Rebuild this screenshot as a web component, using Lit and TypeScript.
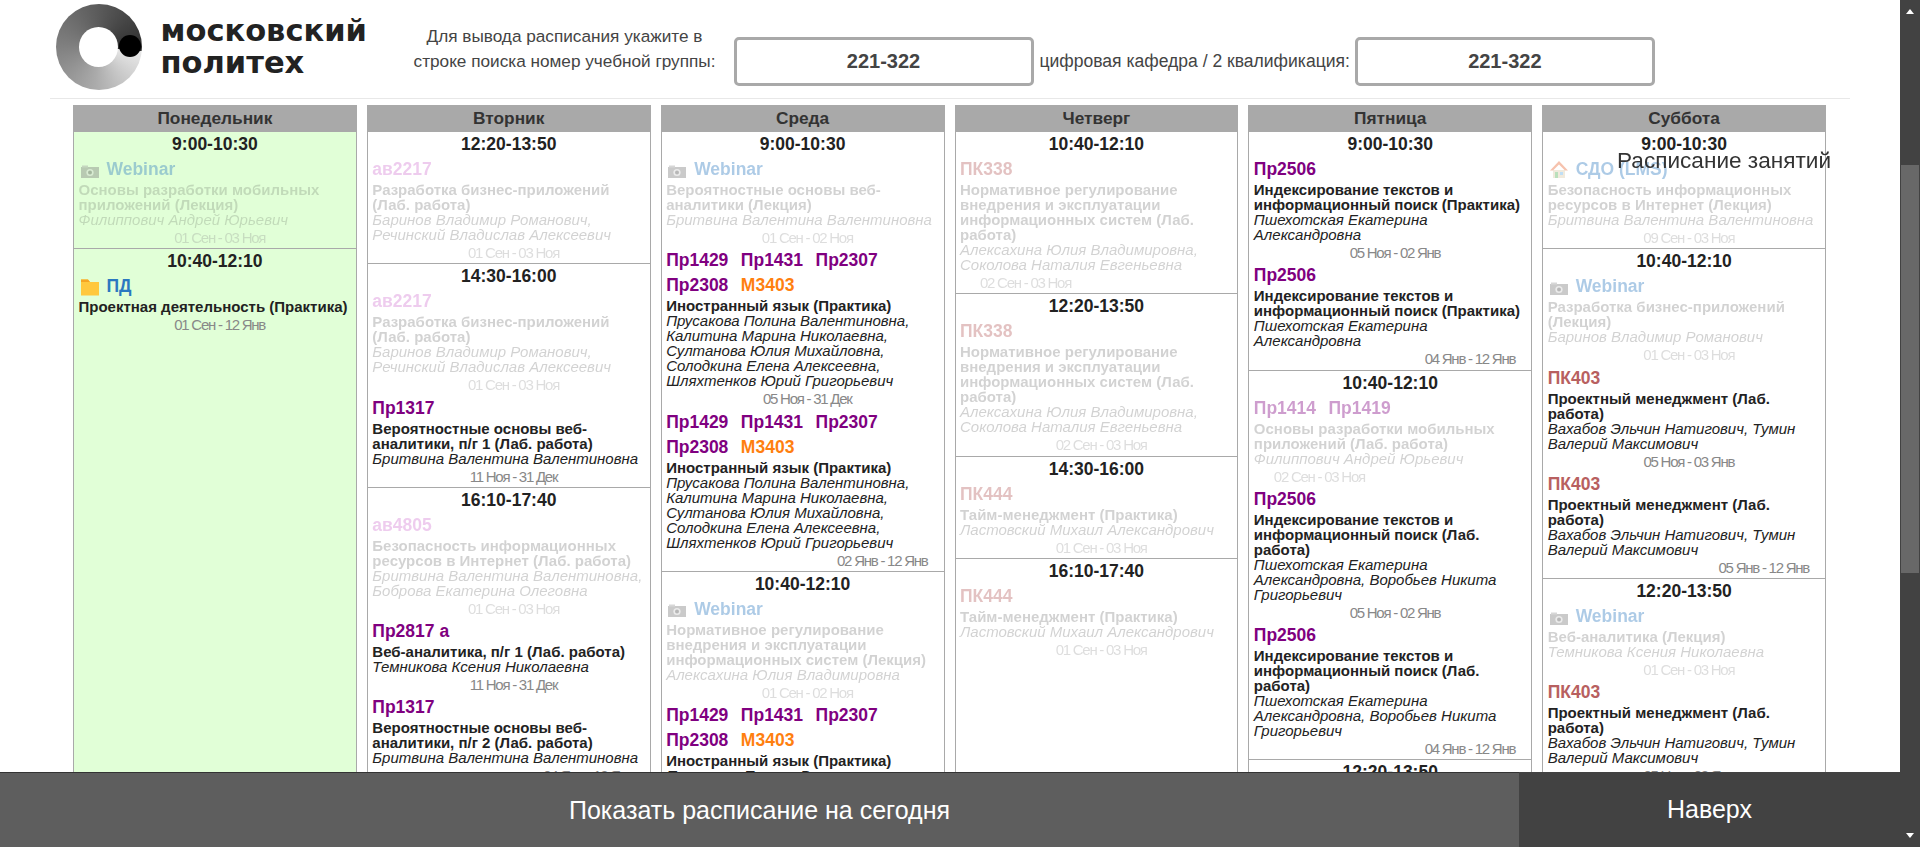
// app.ts - расписание занятий, Московский Политех
import { LitElement, html, css } from 'lit';
import { customElement } from 'lit/decorators.js';
import { classMap } from 'lit/directives/class-map.js';

type Align = 'mid' | 'left' | 'right';
type Icon = 'camera' | 'folder' | 'house';

interface Place {
  name: string;
  kind: 'pr' | 'av' | 'pk' | 'm' | 'link';
  icon?: Icon;
}

interface Lesson {
  places: Place[];
  title: string;
  teacher?: string;
  date: string;
  align?: Align;
  past?: boolean;
}

interface Slot {
  time: string;
  lessons: Lesson[];
}

interface Day {
  name: string;
  today?: boolean;
  slots: Slot[];
}

const pr = (...names: string[]): Place[] => names.map((name) => ({ name, kind: 'pr' }));
const webinar: Place[] = [{ name: 'Webinar', kind: 'link', icon: 'camera' }];
const langPlaces: Place[] = [...pr('Пр1429', 'Пр1431', 'Пр2307', 'Пр2308'), { name: 'М3403', kind: 'm' }];
const langTeachers =
  'Прусакова Полина Валентиновна, Калитина Марина Николаевна, Султанова Юлия Михайловна, Солодкина Елена Алексеевна, Шляхтенков Юрий Григорьевич';
const pk403: Place[] = [{ name: 'ПК403', kind: 'pk' }];
const pm = 'Проектный менеджмент (Лаб. работа)';
const pmTeachers = 'Вахабов Эльчин Натигович, Тумин Валерий Максимович';
const pshLab = 'Пшехотская Екатерина Александровна, Воробьев Никита Григорьевич';
const search = 'Индексирование текстов и информационный поиск';
const norm = 'Нормативное регулирование внедрения и эксплуатации информационных систем';
const bvv = 'Бритвина Валентина Валентиновна';

const days: Day[] = [
  {
    name: 'Понедельник',
    today: true,
    slots: [
      {
        time: '9:00-10:30',
        lessons: [
          {
            places: webinar,
            title: 'Основы разработки мобильных приложений (Лекция)',
            teacher: 'Филиппович Андрей Юрьевич',
            date: '01 Сен - 03 Ноя',
            past: true
          }
        ]
      },
      {
        time: '10:40-12:10',
        lessons: [
          {
            places: [{ name: 'ПД', kind: 'link', icon: 'folder' }],
            title: 'Проектная деятельность (Практика)',
            date: '01 Сен - 12 Янв'
          }
        ]
      }
    ]
  },
  {
    name: 'Вторник',
    slots: [
      {
        time: '12:20-13:50',
        lessons: [
          {
            places: [{ name: 'ав2217', kind: 'av' }],
            title: 'Разработка бизнес-приложений (Лаб. работа)',
            teacher: 'Баринов Владимир Романович, Речинский Владислав Алексеевич',
            date: '01 Сен - 03 Ноя',
            past: true
          }
        ]
      },
      {
        time: '14:30-16:00',
        lessons: [
          {
            places: [{ name: 'ав2217', kind: 'av' }],
            title: 'Разработка бизнес-приложений (Лаб. работа)',
            teacher: 'Баринов Владимир Романович, Речинский Владислав Алексеевич',
            date: '01 Сен - 03 Ноя',
            past: true
          },
          {
            places: pr('Пр1317'),
            title: 'Вероятностные основы веб-аналитики, п/г 1 (Лаб. работа)',
            teacher: bvv,
            date: '11 Ноя - 31 Дек'
          }
        ]
      },
      {
        time: '16:10-17:40',
        lessons: [
          {
            places: [{ name: 'ав4805', kind: 'av' }],
            title: 'Безопасность информационных ресурсов в Интернет (Лаб. работа)',
            teacher: 'Бритвина Валентина Валентиновна, Боброва Екатерина Олеговна',
            date: '01 Сен - 03 Ноя',
            past: true
          },
          {
            places: pr('Пр2817 а'),
            title: 'Веб-аналитика, п/г 1 (Лаб. работа)',
            teacher: 'Темникова Ксения Николаевна',
            date: '11 Ноя - 31 Дек'
          },
          {
            places: pr('Пр1317'),
            title: 'Вероятностные основы веб-аналитики, п/г 2 (Лаб. работа)',
            teacher: bvv,
            date: '04 Янв - 12 Янв',
            align: 'right'
          }
        ]
      }
    ]
  },
  {
    name: 'Среда',
    slots: [
      {
        time: '9:00-10:30',
        lessons: [
          {
            places: webinar,
            title: 'Вероятностные основы веб-аналитики (Лекция)',
            teacher: bvv,
            date: '01 Сен - 02 Ноя',
            past: true
          },
          {
            places: langPlaces,
            title: 'Иностранный язык (Практика)',
            teacher: langTeachers,
            date: '05 Ноя - 31 Дек'
          },
          {
            places: langPlaces,
            title: 'Иностранный язык (Практика)',
            teacher: langTeachers,
            date: '02 Янв - 12 Янв',
            align: 'right'
          }
        ]
      },
      {
        time: '10:40-12:10',
        lessons: [
          {
            places: webinar,
            title: `${norm} (Лекция)`,
            teacher: 'Алексахина Юлия Владимировна',
            date: '01 Сен - 02 Ноя',
            past: true
          },
          {
            places: langPlaces,
            title: 'Иностранный язык (Практика)',
            teacher: langTeachers,
            date: '05 Ноя - 31 Дек'
          }
        ]
      }
    ]
  },
  {
    name: 'Четверг',
    slots: [
      {
        time: '10:40-12:10',
        lessons: [
          {
            places: [{ name: 'ПК338', kind: 'pk' }],
            title: `${norm} (Лаб. работа)`,
            teacher: 'Алексахина Юлия Владимировна, Соколова Наталия Евгеньевна',
            date: '02 Сен - 03 Ноя',
            align: 'left',
            past: true
          }
        ]
      },
      {
        time: '12:20-13:50',
        lessons: [
          {
            places: [{ name: 'ПК338', kind: 'pk' }],
            title: `${norm} (Лаб. работа)`,
            teacher: 'Алексахина Юлия Владимировна, Соколова Наталия Евгеньевна',
            date: '02 Сен - 03 Ноя',
            past: true
          }
        ]
      },
      {
        time: '14:30-16:00',
        lessons: [
          {
            places: [{ name: 'ПК444', kind: 'pk' }],
            title: 'Тайм-менеджмент (Практика)',
            teacher: 'Ластовский Михаил Александрович',
            date: '01 Сен - 03 Ноя',
            past: true
          }
        ]
      },
      {
        time: '16:10-17:40',
        lessons: [
          {
            places: [{ name: 'ПК444', kind: 'pk' }],
            title: 'Тайм-менеджмент (Практика)',
            teacher: 'Ластовский Михаил Александрович',
            date: '01 Сен - 03 Ноя',
            past: true
          }
        ]
      }
    ]
  },
  {
    name: 'Пятница',
    slots: [
      {
        time: '9:00-10:30',
        lessons: [
          {
            places: pr('Пр2506'),
            title: `${search} (Практика)`,
            teacher: 'Пшехотская Екатерина Александровна',
            date: '05 Ноя - 02 Янв'
          },
          {
            places: pr('Пр2506'),
            title: `${search} (Практика)`,
            teacher: 'Пшехотская Екатерина Александровна',
            date: '04 Янв - 12 Янв',
            align: 'right'
          }
        ]
      },
      {
        time: '10:40-12:10',
        lessons: [
          {
            places: pr('Пр1414', 'Пр1419'),
            title: 'Основы разработки мобильных приложений (Лаб. работа)',
            teacher: 'Филиппович Андрей Юрьевич',
            date: '02 Сен - 03 Ноя',
            align: 'left',
            past: true
          },
          {
            places: pr('Пр2506'),
            title: `${search} (Лаб. работа)`,
            teacher: pshLab,
            date: '05 Ноя - 02 Янв'
          },
          {
            places: pr('Пр2506'),
            title: `${search} (Лаб. работа)`,
            teacher: pshLab,
            date: '04 Янв - 12 Янв',
            align: 'right'
          }
        ]
      },
      {
        time: '12:20-13:50',
        lessons: []
      }
    ]
  },
  {
    name: 'Суббота',
    slots: [
      {
        time: '9:00-10:30',
        lessons: [
          {
            places: [{ name: 'СДО (LMS)', kind: 'link', icon: 'house' }],
            title: 'Безопасность информационных ресурсов в Интернет (Лекция)',
            teacher: bvv,
            date: '09 Сен - 03 Ноя',
            past: true
          }
        ]
      },
      {
        time: '10:40-12:10',
        lessons: [
          {
            places: webinar,
            title: 'Разработка бизнес-приложений (Лекция)',
            teacher: 'Баринов Владимир Романович',
            date: '01 Сен - 03 Ноя',
            past: true
          },
          { places: pk403, title: pm, teacher: pmTeachers, date: '05 Ноя - 03 Янв' },
          { places: pk403, title: pm, teacher: pmTeachers, date: '05 Янв - 12 Янв', align: 'right' }
        ]
      },
      {
        time: '12:20-13:50',
        lessons: [
          {
            places: webinar,
            title: 'Веб-аналитика (Лекция)',
            teacher: 'Темникова Ксения Николаевна',
            date: '01 Сен - 03 Ноя',
            past: true
          },
          { places: pk403, title: pm, teacher: pmTeachers, date: '05 Ноя - 03 Янв' }
        ]
      }
    ]
  }
];

@customElement('app-root')
export class AppRoot extends LitElement {
  static override styles = css`
    :host {
      display: flex;
      height: 847px;
      overflow: hidden;
      background: #fff;
      color: #333;
      font-family: 'Liberation Sans', Arial, sans-serif;
    }

    .page {
      flex: 1;
      min-width: 0;
    }

    .top {
      display: flex;
      align-items: flex-start;
      height: 98px;
      margin: 0 50px;
      border-bottom: 1px solid #e8e8e8;
      box-sizing: content-box;
      font-size: 17.2px;
      line-height: 25px;
      color: #444;
    }

    .logo {
      display: flex;
      margin: 4px 0 0 6px;
    }

    .ring {
      position: relative;
      flex: none;
      width: 86px;
      height: 86px;
      border-radius: 50%;
      background: conic-gradient(from 95deg, #e9e9e9, #ababab 90deg, #7e7e7e 180deg, #585858 270deg, #2f2f2f 358deg);
      filter: blur(0.4px);
    }

    .hole {
      position: absolute;
      left: 23px;
      top: 23px;
      width: 39px;
      height: 40px;
      border-radius: 50%;
      background: #fff;
    }

    .dot {
      position: absolute;
      left: 63px;
      top: 31px;
      width: 22px;
      height: 22px;
      border-radius: 50%;
      background: #000;
    }

    .brand {
      width: 212px;
      margin: 11px 0 0 18.5px;
      font-family: 'DejaVu Sans', sans-serif;
      font-size: 30.5px;
      font-weight: 700;
      line-height: 32px;
      color: #222;
      white-space: nowrap;
    }

    .hint {
      width: 330px;
      margin: 24px 0 0 27px;
      text-align: center;
      white-space: nowrap;
    }

    .label {
      margin: 37px 5px 0 6px;
      font-size: 17.55px;
      line-height: 49px;
      white-space: nowrap;
    }

    .search {
      width: 300px;
      height: 49px;
      margin: 37px 0 0 0;
      padding: 0;
      border: 3px solid #a9a9a9;
      border-radius: 5px;
      box-sizing: border-box;
      background: #fff;
      font: 700 20px 'Liberation Sans', Arial, sans-serif;
      color: #444;
      text-align: center;
      outline: none;
    }

    .search.first {
      margin-left: 4px;
    }

    .week {
      display: grid;
      grid-template-columns: repeat(6, 1fr);
      gap: 10px;
      width: 1753px;
      min-height: 760px;
      margin: 6px 0 0 73px;
    }

    .day {
      display: flex;
      flex-direction: column;
      min-width: 0;
    }

    .day-name {
      height: 27px;
      background: #a9a9a9;
      font-size: 17.3px;
      font-weight: 700;
      line-height: 27px;
      text-align: center;
    }

    .day-body {
      flex: 1;
      border: solid #a9a9a9;
      border-width: 0 1px;
    }

    .day.today .day-body {
      background: #e1ffd7;
    }

    .slot {
      border-bottom: 1px solid #a9a9a9;
    }

    .slot:last-child {
      border-bottom: 0;
    }

    .time {
      height: 25px;
      font-size: 17.5px;
      font-weight: 700;
      line-height: 25px;
      text-align: center;
      color: #222;
    }

    .lesson {
      padding: 0 5px 0 4.5px;
      font-size: 15px;
      line-height: 15px;
      color: #222;
    }

    .places {
      display: flex;
      flex-wrap: wrap;
      column-gap: 12.5px;
    }

    .place {
      display: flex;
      align-items: center;
      height: 25px;
      font-size: 17.5px;
      font-weight: 700;
      white-space: nowrap;
    }

    .place.pr {
      color: #800080;
    }

    .place.m {
      color: #ff7f0f;
    }

    .place.pk {
      color: #b86060;
    }

    .place.av {
      color: #d37ad3;
    }

    .place.link {
      color: #2b78c0;
    }

    .place svg {
      width: 18px;
      height: 18px;
      margin: 0 8px 0 2px;
    }

    .title {
      font-weight: 700;
    }

    .teacher {
      font-style: italic;
    }

    .date {
      height: 21.3px;
      padding-left: 10px;
      font-size: 15px;
      line-height: 21px;
      letter-spacing: -1.25px;
      text-align: center;
      color: #888;
    }

    .date.left {
      padding-left: 20px;
      text-align: left;
    }

    .date.right {
      padding: 0 11px 0 0;
      text-align: right;
    }

    .past .place {
      opacity: 0.38;
    }

    .past .title,
    .past .teacher {
      opacity: 0.2;
    }

    .past .date {
      opacity: 0.28;
    }

    .day.today .past .title,
    .day.today .past .teacher {
      opacity: 0.16;
    }

    .caption {
      position: fixed;
      left: 1617px;
      top: 147px;
      font-size: 22.6px;
      line-height: 28px;
      color: #333;
      white-space: nowrap;
    }

    .bar {
      position: fixed;
      left: 0;
      right: 20px;
      bottom: 0;
      display: flex;
      height: 75px;
      font-size: 25px;
      color: #fff;
    }

    .bar div {
      display: flex;
      align-items: center;
      justify-content: center;
    }

    .today-btn {
      flex: 1;
      border-top: 1px solid #333;
      background: #5e5e5e;
    }

    .up-btn {
      width: 381px;
      background: #424242;
    }

    .scrollbar {
      position: relative;
      flex: none;
      width: 20px;
      background: #424242;
    }

    .thumb {
      position: absolute;
      left: 1px;
      right: 1px;
      top: 165px;
      height: 408px;
      background: #686868;
    }

    .arrow {
      position: absolute;
      left: 6px;
      width: 0;
      height: 0;
      border: solid transparent;
      border-width: 0 4px;
    }

    .arrow.up {
      top: 9px;
      border-bottom: 5px solid #fff;
    }

    .arrow.down {
      top: 833px;
      border-top: 5px solid #fff;
    }
  `;

  private renderIcon(icon: Icon) {
    if (icon === 'camera') {
      return html`<svg viewBox="0 0 18 18">
        <rect x="0" y="6" width="18" height="11" fill="#777"></rect>
        <rect x="1" y="4.5" width="6" height="2" fill="#999"></rect>
        <circle cx="9" cy="11.5" r="3.6" fill="#ccc"></circle>
        <circle cx="9" cy="11.5" r="2" fill="#444"></circle>
      </svg>`;
    }
    if (icon === 'folder') {
      return html`<svg viewBox="0 0 18 18">
        <path d="M0 1.5h7l2 2.5h9v13.5H0z" fill="#ffc83d"></path>
        <path d="M0 1.5h7l2 2.5H0z" fill="#f5a623"></path>
      </svg>`;
    }
    return html`<svg viewBox="0 0 18 18">
      <path d="M3 9h12v8H3z" fill="#d8c9a8"></path>
      <path d="M9 0L18 9.5h-3L9 3.5 3 9.5H0z" fill="#e8622c"></path>
      <path d="M5 11h3v6H5z" fill="#4caf50"></path>
      <path d="M10 11h3v3h-3z" fill="#5aa9e6"></path>
    </svg>`;
  }

  private renderLesson(lesson: Lesson) {
    return html`
      <div class=${classMap({ lesson: true, past: !!lesson.past })}>
        <div class="places">
          ${lesson.places.map(
            (p) => html`<span class="place ${p.kind}">${p.icon ? this.renderIcon(p.icon) : ''}${p.name}</span>`
          )}
        </div>
        <div class="title">${lesson.title}</div>
        ${lesson.teacher ? html`<div class="teacher">${lesson.teacher}</div>` : ''}
        <div class="date ${lesson.align ?? 'mid'}">${lesson.date}</div>
      </div>
    `;
  }

  override render() {
    return html`
      <div class="page">
        <header class="top">
          <div class="logo">
            <div class="ring">
              <div class="hole"></div>
              <div class="dot"></div>
            </div>
            <div class="brand">московский<br />политех</div>
          </div>
          <div class="hint">Для вывода расписания укажите в<br />строке поиска номер учебной группы:</div>
          <input class="search first" readonly value="221-322" />
          <div class="label">цифровая кафедра / 2 квалификация:</div>
          <input class="search" readonly value="221-322" />
        </header>

        <div class="week">
          ${days.map(
            (day) => html`
              <section class=${classMap({ day: true, today: !!day.today })}>
                <div class="day-name">${day.name}</div>
                <div class="day-body">
                  ${day.slots.map(
                    (slot) => html`
                      <div class="slot">
                        <div class="time">${slot.time}</div>
                        ${slot.lessons.map((l) => this.renderLesson(l))}
                      </div>
                    `
                  )}
                </div>
              </section>
            `
          )}
        </div>
      </div>

      <div class="caption">Расписание занятий</div>

      <div class="bar">
        <div class="today-btn">Показать расписание на сегодня</div>
        <div class="up-btn">Наверх</div>
      </div>

      <div class="scrollbar">
        <div class="arrow up"></div>
        <div class="thumb"></div>
        <div class="arrow down"></div>
      </div>
    `;
  }
}

declare global {
  interface HTMLElementTagNameMap {
    'app-root': AppRoot;
  }
}
